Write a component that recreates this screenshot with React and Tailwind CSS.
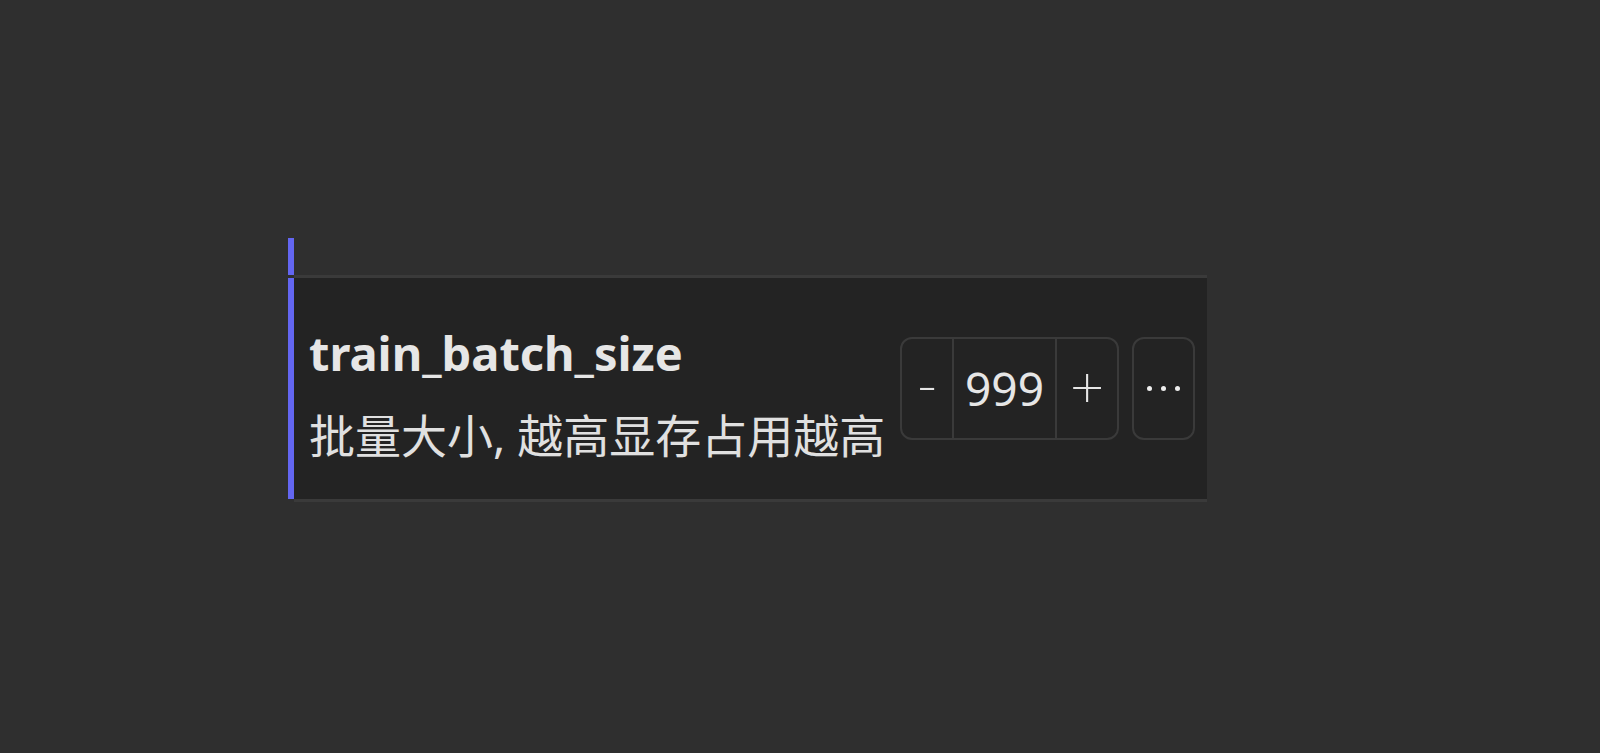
import React from 'react';

const App = () => {
    return (
        <div className="w-[1600px] h-[753px] bg-[#2f2f2f] pt-[238px] pl-[288px]" style={{ fontFamily: '"Noto Sans", "Noto Sans CJK SC", sans-serif' }}>
            <div className="w-[919px]">
                {/* previous item edge */}
                <div className="h-[37px] w-[6px] bg-[#6366f1]"></div>

                {/* setting row */}
                <div className="flex">
                    <div className="w-[6px] bg-[#6366f1] my-[3px]"></div>
                    <div className="flex-1 flex items-center bg-[#232323] border-y-[3px] border-[#3a3a3a] h-[227px] pl-[15px] pr-[12px]">
                        <div className="flex flex-col pt-[10px]">
                            <div className="text-[47px] leading-[60px] font-bold text-[#e6e6e6]">train_batch_size</div>
                            <div className="text-[46px] leading-[60px] text-[#e0e0e0] mt-[22px]">批量大小, 越高显存占用越高</div>
                        </div>

                        <div className="ml-auto flex items-center gap-[13px]">
                            {/* stepper */}
                            <div className="flex h-[103px] border-2 border-[#3a3a3a] rounded-[12px] text-[#e6e6e6]">
                                <div className="w-[50px] flex items-center justify-center text-[58px] font-extralight leading-none pb-[12px]">-</div>
                                <div className="w-[105px] flex items-center justify-center border-x-2 border-[#3a3a3a] text-[46px]">999</div>
                                <div className="w-[60px] flex items-center justify-center text-[60px] font-extralight leading-none pb-[4px]">+</div>
                            </div>
                            {/* more */}
                            <div className="w-[63px] h-[103px] border-2 border-[#3a3a3a] rounded-[12px] flex items-center justify-center gap-[9px]">
                                <span className="w-[5px] h-[5px] rounded-full bg-[#eeeeee]"></span>
                                <span className="w-[5px] h-[5px] rounded-full bg-[#eeeeee]"></span>
                                <span className="w-[5px] h-[5px] rounded-full bg-[#eeeeee]"></span>
                            </div>
                        </div>
                    </div>
                </div>
            </div>
        </div>
    );
};

export default App;
